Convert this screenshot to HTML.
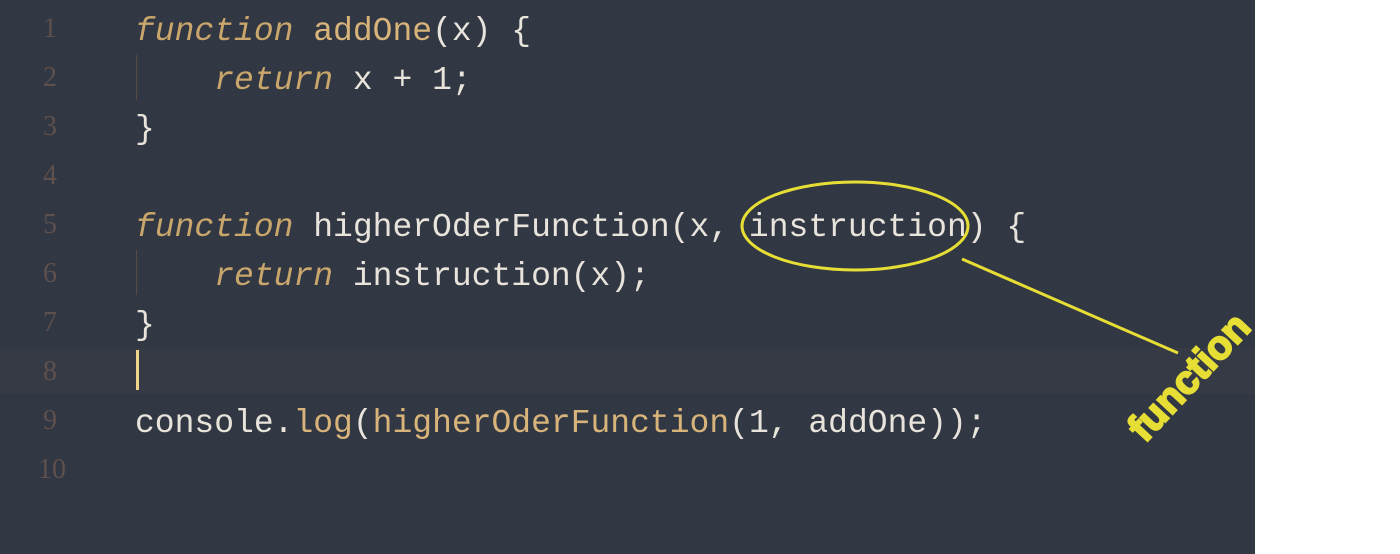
<!DOCTYPE html>
<html><head><meta charset="utf-8"><style>
body{margin:0;width:1400px;height:554px;background:#fff;overflow:hidden;position:relative}
#ed{position:absolute;left:0;top:0;width:1255px;height:554px;background:#313743}
.l{position:absolute;left:0;height:49px;font-family:"Liberation Mono",monospace;font-size:33px;white-space:pre;color:#e8e4dc}
.n{position:absolute;left:30px;width:40px;text-align:center;color:#5e504d;font-family:"Liberation Serif",serif;font-size:28px}
.c{position:absolute;left:135px}
.k{color:#c9a66b;font-style:italic}
.f{color:#d8b47a}
.g{position:absolute;left:136px;width:1px;background:#5a4a44}
</style></head><body>
<div id="ed">
<div style="position:absolute;left:0;top:348px;width:1255px;height:46px;background:#353a45"></div>
<div class="g" style="top:55px;height:45px"></div>
<div class="g" style="top:250px;height:45px"></div>
<div style="position:absolute;left:136px;top:350px;width:3px;height:40px;background:#f0d48a"></div>
<div class="l" style="top:13px"><span class="n">1</span><span class="c"><span class="k">function</span> <span class="f">addOne</span>(x) {</span></div>
<div class="l" style="top:62px"><span class="n">2</span><span class="c">    <span class="k">return</span> x + 1;</span></div>
<div class="l" style="top:111px"><span class="n">3</span><span class="c">}</span></div>
<div class="l" style="top:160px"><span class="n">4</span></div>
<div class="l" style="top:209px"><span class="n">5</span><span class="c"><span class="k">function</span> higherOderFunction(x, instruction) {</span></div>
<div class="l" style="top:258px"><span class="n">6</span><span class="c">    <span class="k">return</span> instruction(x);</span></div>
<div class="l" style="top:307px"><span class="n">7</span><span class="c">}</span></div>
<div class="l" style="top:356px"><span class="n">8</span></div>
<div class="l" style="top:405px"><span class="n">9</span><span class="c">console.<span class="f">log</span>(<span class="f">higherOderFunction</span>(1, addOne));</span></div>
<div class="l" style="top:454px"><span class="n" style="left:22px;width:60px">10</span></div>
<svg style="position:absolute;left:0;top:0" width="1255" height="554">
<ellipse cx="855" cy="226" rx="113" ry="44" fill="none" stroke="#e6de35" stroke-width="3"/>
<line x1="962" y1="259" x2="1178" y2="353" stroke="#e6de35" stroke-width="3"/>
<text x="0" y="0" transform="translate(1191,379) rotate(-47)" text-anchor="middle" font-family="Liberation Sans,sans-serif" font-weight="bold" font-size="40" fill="#e6de35" stroke="#e6de35" stroke-width="2" dominant-baseline="middle">function</text>
</svg>
</div>
</body></html>
